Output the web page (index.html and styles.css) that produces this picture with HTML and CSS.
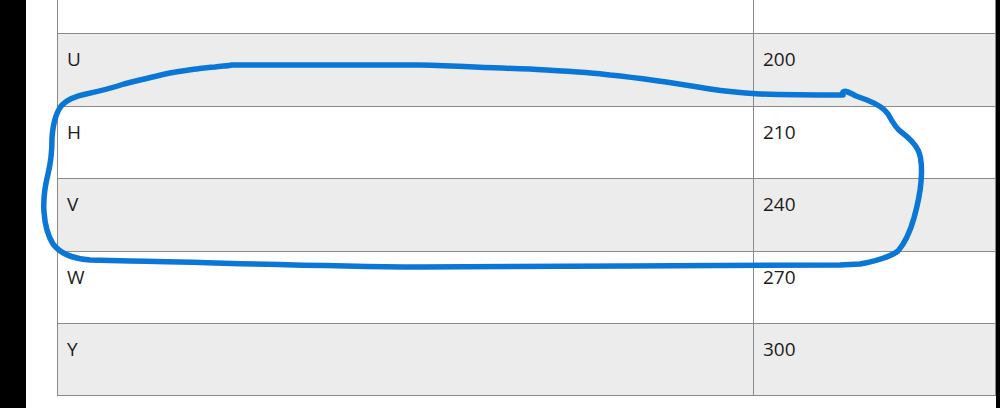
FILE: index.html
```html
<!DOCTYPE html>
<html>
<head>
<meta charset="utf-8">
<link rel="stylesheet" href="styles.css">
</head>
<body>
<div class="screen">
  <div class="content">
    <table class="data">
      <tr class="row-white"><td class="c-name"></td><td class="c-val"></td></tr>
      <tr class="row-gray"><td class="c-name">U</td><td class="c-val">200</td></tr>
      <tr class="row-white"><td class="c-name">H</td><td class="c-val">210</td></tr>
      <tr class="row-gray"><td class="c-name">V</td><td class="c-val">240</td></tr>
      <tr class="row-white"><td class="c-name">W</td><td class="c-val">270</td></tr>
      <tr class="row-gray"><td class="c-name">Y</td><td class="c-val">300</td></tr>
    </table>
  </div>
  <svg class="scribble" width="1000" height="408" viewBox="0 0 1000 408">
    <path d="M843 92 C846 90 850 93 856 96 L867 100 C877 104 884 108 888 114 C892 121 895 127 900 131 C908 137 914 142 918 150 C922 158 922 170 921 182 C920 195 917 207 914 218 C910 232 905 243 898 251 C890 257 876 261 860 264 L840 265 C700 266 560 266 420 267 C300 266 200 262 130 261 L90 260 C70 258 60 253 53 244 C48 236 45 226 44 212 C43 198 45 186 48 174 C51 162 52 150 52 138 C53 124 56 112 62 105 C68 99 76 96 86 94 C100 91 112 88 124 84 C140 80 156 76 170 73 C188 70 200 68 215 67 C222 66 228 66 232 65 C300 65 360 65 420 65 C460 66 490 68 530 69 C565 71 590 72 610 75 C650 79 680 84 710 89 C730 92 745 93 760 94 C790 95 815 95 843 95"
      fill="none" stroke="#0a77d6" stroke-width="5.5" stroke-linecap="round" stroke-linejoin="round"/>
  </svg>
</div>
</body>
</html>
```

FILE: styles.css
```css
html, body {
  margin: 0;
  padding: 0;
  overflow: hidden;
  background: #ffffff;
}

.screen {
  position: relative;
  box-sizing: border-box;
  width: 1000px;
  height: 408px;
  overflow: hidden;
  border-left: 26px solid #000000;
  border-right: 4px solid #000000;
  font-family: "Open Sans", "Noto Sans", sans-serif;
  color: #1c1c1c;
}

.content {
  padding-left: 31px;
}

.data {
  border-collapse: collapse;
  table-layout: fixed;
  width: 939px;
  margin-top: -39px;
  font-size: 19px;
  line-height: 27px;
}

.data td {
  border: 1px solid #8a8a8a;
  height: 47.4px;
  padding: 12px 8px 12px 9px;
  vertical-align: top;
}

.c-name {
  width: 678px;
}

.row-gray {
  background: #ececec;
}

.row-white {
  background: #ffffff;
}

.scribble {
  position: absolute;
  left: -26px;
  top: 0;
  pointer-events: none;
}
```
